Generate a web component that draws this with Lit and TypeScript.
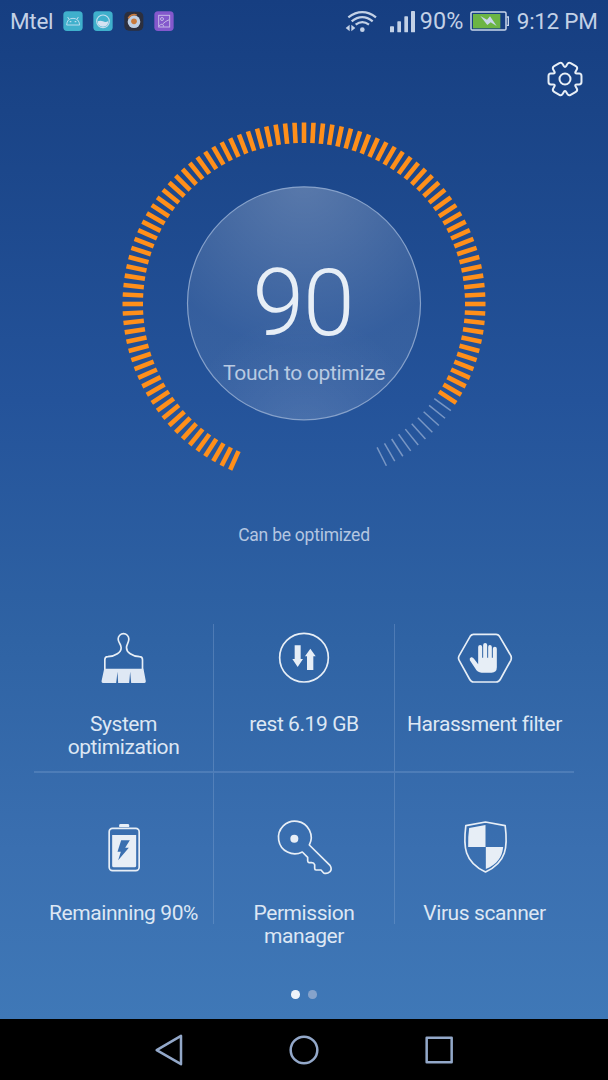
import { LitElement, html, svg, css } from "lit";
import { customElement } from "lit/decorators.js";

const INK = "#e7eef6";

function polar(deg: number, r: number): [number, number] {
  const a = (deg * Math.PI) / 180;
  return [r * Math.cos(a), r * Math.sin(a)];
}

/** Closed outline whose corners are softened by a fixed radius. */
function roundedPath(pts: [number, number][], radius: number): string {
  const n = pts.length;
  let d = "";
  for (let i = 0; i < n; i++) {
    const p = pts[i], a = pts[(i + n - 1) % n], b = pts[(i + 1) % n];
    const toward = (q: [number, number]) => {
      const l = Math.hypot(q[0] - p[0], q[1] - p[1]);
      const k = Math.min(radius, l / 2) / l;
      return `${(p[0] + (q[0] - p[0]) * k).toFixed(2)} ${(p[1] + (q[1] - p[1]) * k).toFixed(2)}`;
    };
    d += `${i ? "L" : "M"}${toward(a)}Q${p[0].toFixed(2)} ${p[1].toFixed(2)} ${toward(b)}`;
  }
  return d + "Z";
}

const gearPts: [number, number][] = [];
for (let t = 0; t < 6; t++) {
  gearPts.push(polar(t * 60 - 18, 52), polar(t * 60 + 18, 52), polar(t * 60 + 30, 33));
}
const gearPath = roundedPath(gearPts, 7);

@customElement("status-bar")
export class StatusBar extends LitElement {
  static styles = css`
    :host { display: flex; align-items: center; height: 42px; padding: 0 10.5px 0 10px; box-sizing: border-box;
      font: 400 22.5px/42px Roboto, sans-serif; color: #c3d1e6; white-space: nowrap; letter-spacing: -.3px; }
    .apps { display: flex; gap: 10.3px; margin-left: 9.7px; margin-top: -1px; flex: 1; }
    .level { font-size: 23.4px; letter-spacing: 0; }
    svg { display: block; flex: none; }
    .wifi { margin-right: 13px; }
    .signal { margin-right: 5px; }
    .battery { margin: 0 7.5px 0 7px; }
  `;
  render() {
    return html`
      <span>Mtel</span>
      <div class="apps">
        <svg width="20" height="20" viewBox="188 30 60 60">
          <rect x="189" y="31" width="58" height="59" rx="11" fill="#3fb0cc" />
          <path d="M199 72Q200 52 218 52Q236 52 238 72ZM206 55L202 48M230 55L234 48" fill="none" stroke="#b9dcee" stroke-width="3" />
          <path d="M208 62h5M223 62h5" stroke="#b9dcee" stroke-width="4" />
        </svg>
        <svg width="20" height="20" viewBox="279 30 60 60">
          <rect x="280" y="31" width="58" height="59" rx="11" fill="#3fb0cc" />
          <circle cx="309" cy="61" r="19" fill="none" stroke="#c3dcee" stroke-width="3.5" />
          <path d="M293 61Q301 57 309 61T325 60Q325 77 309 77Q293 77 293 61Z" fill="#d3e2f2" />
        </svg>
        <svg width="20" height="20" viewBox="371 30 60 60">
          <rect x="372" y="32" width="57" height="57" rx="14" fill="#2c2f3e" />
          <circle cx="401" cy="62" r="19" fill="#bfcfe4" />
          <path d="M384 52A19 19 0 0 1 409 42" fill="none" stroke="#c9793a" stroke-width="5" />
          <circle cx="401" cy="61" r="8.5" fill="#c9793a" />
        </svg>
        <svg width="20" height="20" viewBox="461 30 60 60">
          <rect x="462" y="31" width="58" height="59" rx="11" fill="#8458cc" />
          <g fill="none" stroke="#c4b8e6" stroke-width="3">
            <rect x="475" y="43" width="33" height="35" />
            <circle cx="485" cy="54" r="4.5" />
            <path d="M475 76Q488 62 490 77M488 68Q496 60 507 56" />
          </g>
        </svg>
      </div>
      <svg class="wifi" width="32" height="24" viewBox="45 24 96 72">
        <g fill="none" stroke="#c3d1e6" stroke-width="7">
          <path d="M55 49Q97 18 138 49" />
          <path d="M65 61Q97 36 128 61" />
          <path d="M77 71Q97 56 117 71" />
        </g>
        <circle cx="97" cy="86" r="7" fill="#c3d1e6" />
        <path d="M59 71V91L47 81ZM64 71V91L76 81Z" fill="#c3d1e6" />
      </svg>
      <svg class="signal" width="25" height="24" viewBox="180 24 75 72" fill="#c3d1e6">
        <rect x="180" y="76" width="12" height="18" rx="2" /><rect x="202" y="61" width="11" height="33" rx="2" />
        <rect x="223" y="46" width="11" height="48" rx="2" /><rect x="243" y="30" width="12" height="64" rx="2" />
      </svg>
      <span class="level">90%</span>
      <svg class="battery" width="39" height="22" viewBox="422 28 117 66">
        <rect x="425" y="34" width="105" height="54" rx="4" fill="none" stroke="#c9d6ea" stroke-width="4.5" />
        <path d="M532 49h5v25h-5" fill="none" stroke="#c9d6ea" stroke-width="4" />
        <rect x="431" y="40" width="82" height="43" fill="#6cb544" />
        <path d="M453 46L473 57L482 47L502 76L484 65L474 73Z" fill="#c9d6ea" />
      </svg>
      <span>9:12 PM</span>
    `;
  }
}

@customElement("score-dial")
export class ScoreDial extends LitElement {
  static styles = css`
    :host { display: grid; width: 364px; height: 364px; font-family: Roboto, sans-serif; }
    .ring, .copy { grid-area: 1 / 1; }
    .copy { display: flex; flex-direction: column; align-items: center; padding-top: 128px; }
    .score { font-size: 93px; font-weight: 300; line-height: 108px; color: #e7eef6; letter-spacing: -1px; margin-right: 2px; }
    .hint { font-size: 21px; letter-spacing: -.32px; line-height: 24px; color: #b9cae2; margin-top: 3px; }
  `;
  render() {
    const ticks = [];
    for (let a = -156; a <= 153; a += 3) {
      const on = a <= 123;
      ticks.push(svg`<line x1="0" y1="-181.5" x2="0" y2="-161" transform=${`rotate(${a})`}
        stroke=${on ? "#ff8f1a" : "#7896c4"} stroke-width=${on ? 4.6 : 1.5} />`);
    }
    return html`
      <svg class="ring" width="364" height="364" viewBox="-182 -182 364 364">
        <defs>
          <radialGradient id="top" gradientUnits="userSpaceOnUse" cx="0" cy="-125" r="170">
            <stop offset="0" stop-color="#fff" stop-opacity=".27" />
            <stop offset=".4" stop-color="#fff" stop-opacity=".2" />
            <stop offset="1" stop-color="#fff" stop-opacity=".09" />
          </radialGradient>
          <radialGradient id="low" gradientUnits="userSpaceOnUse" cx="0" cy="130" r="120">
            <stop offset="0" stop-color="#fff" stop-opacity=".09" />
            <stop offset="1" stop-color="#fff" stop-opacity="0" />
          </radialGradient>
        </defs>
        ${ticks}
        <circle cy="-.7" r="116.5" fill="url(#top)" />
        <circle cy="-.7" r="116.5" fill="url(#low)" stroke="#86a1ca" stroke-width="1.2" />
      </svg>
      <div class="copy"><div class="score">90</div><div class="hint">Touch to optimize</div></div>
    `;
  }
}

const brush = svg`
  <path d="M224 163V134Q224 125 233 125C256 124 273 112 273 98C273 87 264 84 264 72A16 16 0 0 1 296 72C296 84 289 87 289 98C289 112 306 124 328 125Q337 125 337 134V163"
    fill="none" stroke=${INK} stroke-width="5" />
  <path d="M222 161H340L347 199Q347 204 343 204H303L300 170L297 204H264L262 170L258 204H218Q214 204 214 199Z" fill="#dfe8f4" />`;

const traffic = svg`
  <circle cx="282" cy="128" r="73" fill="none" stroke=${INK} stroke-width="5" />
  <path d="M254 91H272V132H279L263 156L247 132H254ZM291 165V124H285L301 101L317 124H310V165Z" fill=${INK} />`;

const hand = svg`
  <path d="M250 58H318Q324 58 328 64L362 122Q365 129 362 136L331 192Q326 201 318 201H250Q243 201 238 192L207 136Q203 129 207 122L240 64Q244 58 250 58Z"
    fill="none" stroke=${INK} stroke-width="5" />
  <path d="M264 148V96Q264 90 270 90Q276 90 276 96V128H279V90Q279 84 285 84Q291 84 291 90V128H294V96Q294 90 299 90Q305 90 305 96V128H308V101Q308 95 314 95Q320 95 320 101V157Q320 173 304 173H274Q262 173 255 160L239 136Q237 129 243 127Q248 126 252 132Z"
    fill=${INK} />`;

const battery = svg`
  <path d="M267 81V76Q267 72 271 72H293Q297 72 297 76V81Z" fill=${INK} />
  <rect x="237" y="85" width="90" height="127" rx="10" fill="none" stroke=${INK} stroke-width="5" />
  <path fill-rule="evenodd" d="M246 105H318V197Q318 202 313 202H251Q246 202 246 197ZM273 121L262 155H272L264 181L296 143H285L299 121Z" fill=${INK} />`;

const key = svg`
  <path d="M127 156A49 49 0 1 1 148 135L210 196Q217 207 210 215Q201 223 191 219L183 210H168Q164 210 164 205V194Q162 188 155 188H147Q143 187 143 182V172Z"
    fill="none" stroke=${INK} stroke-width="5" stroke-linejoin="round" />
  <circle cx="103" cy="116" r="12" fill=${INK} />`;

const shield = svg`
  <path d="M676 66L735 77C743 140 740 186 676 216C612 186 609 140 617 77Z" fill="none" stroke=${INK} stroke-width="5" stroke-linejoin="round" />
  <path d="M676 75V141H624Q623 112 627 84ZM677 141H729C726 172 711 193 677 207Z" fill=${INK} />`;

const tiles = [
  { label: "System optimization", box: "191.5 39 180 180", icon: brush },
  { label: "rest 6.19 GB", box: "192 39 180 180", icon: traffic },
  { label: "Harassment filter", box: "194.5 39 180 180", icon: hand },
  { label: "Remainning 90%", box: "191.5 51 180 180", icon: battery },
  { label: "Permission manager", box: "42 51 180 180", icon: key },
  { label: "Virus scanner", box: "584.5 51 180 180", icon: shield },
];

@customElement("tool-grid")
export class ToolGrid extends LitElement {
  static styles = css`
    :host { display: grid; grid-template-columns: repeat(3, 180px); grid-template-rows: 149px 151px; width: 540px;
      font: 400 21px/23px Roboto, sans-serif; letter-spacing: -.42px; color: #dde7f4; text-align: center; }
    .tile { display: flex; flex-direction: column; align-items: center; box-sizing: border-box; padding-top: 4px; min-height: 0;
      border: 0 solid rgba(150, 180, 220, .3); }
    .tile:nth-child(-n + 3) { border-bottom-width: 2px; border-bottom-color: rgba(150, 180, 220, .24); }
    .tile:nth-child(n + 4) { padding-top: 44px; }
    .tile:nth-child(3n + 1) { border-right-width: 1px; }
    .tile:nth-child(3n) { border-left-width: 1px; }
    svg { display: block; flex: none; margin-bottom: 24.5px; }
    .label { flex: none; max-width: 160px; }
  `;
  render() {
    return tiles.map(
      (t) => html`<div class="tile">
        <svg width="60" height="60" viewBox=${t.box}>${t.icon}</svg>
        <div class="label">${t.label}</div>
      </div>`
    );
  }
}

@customElement("nav-bar")
export class NavBar extends LitElement {
  static styles = css`
    :host { display: flex; justify-content: center; align-items: center; gap: 95px; height: 61px; background: #000; }
    svg { display: block; fill: none; stroke: #93a8c9; stroke-width: 7.5; stroke-linejoin: round; }
  `;
  render() {
    return html`
      <svg width="40" height="40" viewBox="57 58.5 120 120"><path d="M80 119L153 76V161Z" /></svg>
      <svg width="40" height="40" viewBox="462 58.5 120 120"><circle cx="522" cy="118.5" r="40" /></svg>
      <svg width="40" height="40" viewBox="867 58.5 120 120"><rect x="890" y="82" width="75" height="73" /></svg>
    `;
  }
}

@customElement("app-root")
export class AppRoot extends LitElement {
  static styles = css`
    :host { display: flex; flex-direction: column; width: 608px; height: 1080px; overflow: hidden; font-family: Roboto, sans-serif; }
    .screen { flex: 1; min-height: 0; display: flex; flex-direction: column; align-items: center;
      background: linear-gradient(#163e81 0, #1a4487 110px, #24539a 400px, #2f63a4 640px, #3a6fb0 850px, #3f78b7 100%); }
    status-bar { width: 100%; }
    .toolbar { align-self: flex-end; height: 80px; padding: 19px 25.5px 0 0; box-sizing: border-box; }
    .toolbar svg { display: block; }
    .state { margin-top: 38px; height: 22px; font-size: 17.5px; letter-spacing: -.24px; line-height: 22px; color: #b4c6e1; }
    tool-grid { margin-top: 78px; }
    .pages { display: flex; gap: 8.5px; margin-top: 66px; }
    .dot { width: 8.5px; height: 8.5px; border-radius: 50%; background: #eef3fa; }
    .dot.off { background: #86a3cb; }
  `;
  render() {
    return html`
      <div class="screen">
        <status-bar></status-bar>
        <div class="toolbar">
          <svg width="36" height="36" viewBox="-54 -54 108 108" fill="none" stroke="#e7eef6" stroke-width="6">
            <path d=${gearPath} stroke-linejoin="round" /><circle r="16.5" />
          </svg>
        </div>
        <score-dial></score-dial>
        <div class="state">Can be optimized</div>
        <tool-grid></tool-grid>
        <div class="pages"><span class="dot"></span><span class="dot off"></span></div>
      </div>
      <nav-bar></nav-bar>
    `;
  }
}
